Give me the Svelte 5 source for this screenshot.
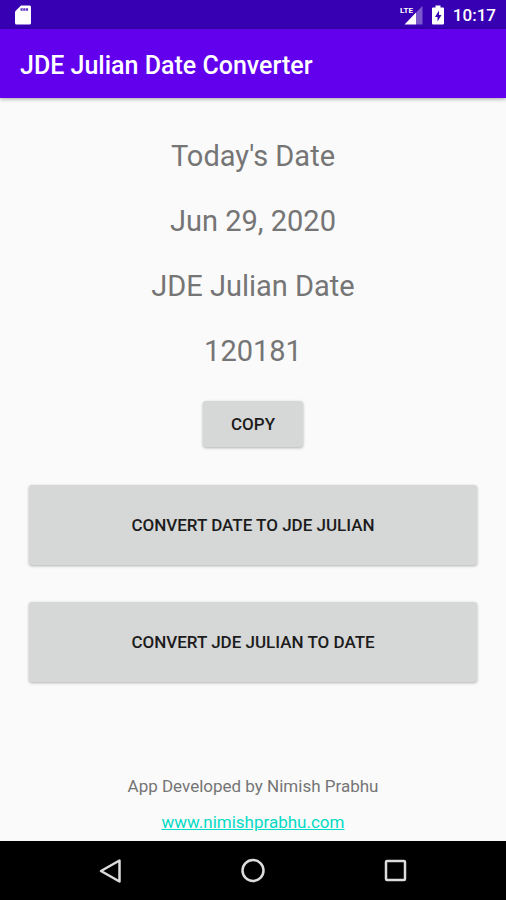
<script lang="ts">
  let todaysDate = 'Jun 29, 2020';
  let julianDate = '120181';

  function copyDate() {
    navigator.clipboard?.writeText(julianDate);
  }
</script>

<div class="screen">
  <div class="status-bar">
    <svg width="16" height="20" viewBox="0 0 16 20" aria-hidden="true">
      <path fill="#fff" fill-rule="evenodd" d="M6 0.500h8.500a1.500 1.500 0 0 1 1.500 1.500v16a1.500 1.500 0 0 1-1.500 1.500h-13a1.500 1.500 0 0 1-1.500-1.500V6.500z" />
      <path stroke="#3700b3" stroke-opacity="0.8" stroke-width="2.500" stroke-dasharray="2.200 0.500" d="M5.500 4.500h8" />
    </svg>
    <div class="status-right">
      <svg width="23" height="20" viewBox="0 0 23 20" aria-hidden="true">
        <path fill="#fff" fill-opacity="0.35" d="M22.500 1v18.500H16V7.500z" />
        <path fill="#fff" d="M16 7.500v12H4.500z" />
        <text class="lte" x="0" y="8">LTE</text>
      </svg>
      <svg width="12" height="20" viewBox="0 0 12 20" aria-hidden="true">
        <path fill="#fff" fill-rule="evenodd" d="M3.500 0.500h5v2H11a1 1 0 0 1 1 1v15a1 1 0 0 1-1 1H1a1 1 0 0 1-1-1v-15a1 1 0 0 1 1-1h2.500zM7 5.500L3 12h2.500v4.500L9.500 10H7z" />
      </svg>
      <span class="clock">10:17</span>
    </div>
  </div>

  <header class="app-bar">
    <h1>JDE Julian Date Converter</h1>
  </header>

  <main>
    <div class="dates">
      <p>Today's Date</p>
      <p>{todaysDate}</p>
      <p>JDE Julian Date</p>
      <p>{julianDate}</p>
    </div>

    <button class="btn btn-copy" on:click={copyDate}>COPY</button>
    <button class="btn btn-wide">CONVERT DATE TO JDE JULIAN</button>
    <button class="btn btn-wide">CONVERT JDE JULIAN TO DATE</button>

    <footer>
      <p>App Developed by Nimish Prabhu</p>
      <a href="http://www.nimishprabhu.com">www.nimishprabhu.com</a>
    </footer>
  </main>

  <nav class="nav-bar">
    <button aria-label="Back">
      <svg width="26" height="26" viewBox="0 0 26 26">
        <path d="M21.500 2.500v21L3 13z" />
      </svg>
    </button>
    <button aria-label="Home">
      <svg width="26" height="26" viewBox="0 0 26 26">
        <circle cx="13" cy="12.500" r="10.500" />
      </svg>
    </button>
    <button aria-label="Recent apps">
      <svg width="26" height="26" viewBox="0 0 26 26">
        <rect x="4" y="3" width="19" height="19" rx="1" />
      </svg>
    </button>
  </nav>
</div>

<style>
  :global(body) {
    background-color: #fafafa;
  }

  .screen {
    display: flex;
    flex-direction: column;
    min-height: 100vh;
    font-family: Roboto, "Liberation Sans", sans-serif;
    color: #757575;
  }

  .status-bar {
    display: flex;
    justify-content: space-between;
    align-items: center;
    height: 29px;
    padding: 0 10px 0 15px;
    background-color: #3700b3;
    color: #fff;
  }

  .status-right {
    display: flex;
    align-items: center;
    gap: 9px;
  }

  .lte {
    font-size: 8px;
    font-weight: 700;
    fill: #fff;
  }

  .clock {
    font-size: 17px;
    line-height: 20px;
    font-weight: 500;
  }

  .app-bar {
    display: flex;
    align-items: center;
    height: 69px;
    padding: 0 20px;
    background-color: #6200ee;
    box-shadow: 0 1px 4px rgba(0, 0, 0, 0.35);
  }

  h1 {
    margin: 4px 0 0;
    font-size: 25px;
    line-height: 30px;
    font-weight: 500;
    color: #fff;
  }

  main {
    flex: 1;
    display: flex;
    flex-direction: column;
    align-items: center;
    padding: 41px 29px 9px;
  }

  p {
    margin: 0;
  }

  .dates {
    display: flex;
    flex-direction: column;
    gap: 30px;
    font-size: 29px;
    line-height: 35px;
    text-align: center;
  }

  .btn {
    border: none;
    border-radius: 3px;
    background-color: #d6d7d7;
    box-shadow: 0 1px 3px rgba(0, 0, 0, 0.3);
    color: #1c1c1c;
    font-family: inherit;
    font-size: 17px;
    font-weight: 500;
    cursor: pointer;
  }

  .btn-copy {
    width: 100px;
    height: 46px;
    margin: 32px 0 1px;
  }

  .btn-wide {
    width: 100%;
    height: 80px;
    margin-top: 37px;
  }

  footer {
    display: flex;
    flex-direction: column;
    align-items: center;
    gap: 16px;
    margin-top: auto;
    font-size: 17px;
    line-height: 20px;
  }

  a {
    color: #03dac5;
  }

  .nav-bar {
    display: flex;
    height: 59px;
    padding: 0 40px;
    background-color: #000;
  }

  .nav-bar button {
    flex: 1;
    display: flex;
    justify-content: center;
    align-items: center;
    padding: 0;
    border: none;
    background: none;
    cursor: pointer;
  }

  .nav-bar svg {
    fill: none;
    stroke: #dcdcdc;
    stroke-width: 2.5;
    stroke-linejoin: round;
  }
</style>
